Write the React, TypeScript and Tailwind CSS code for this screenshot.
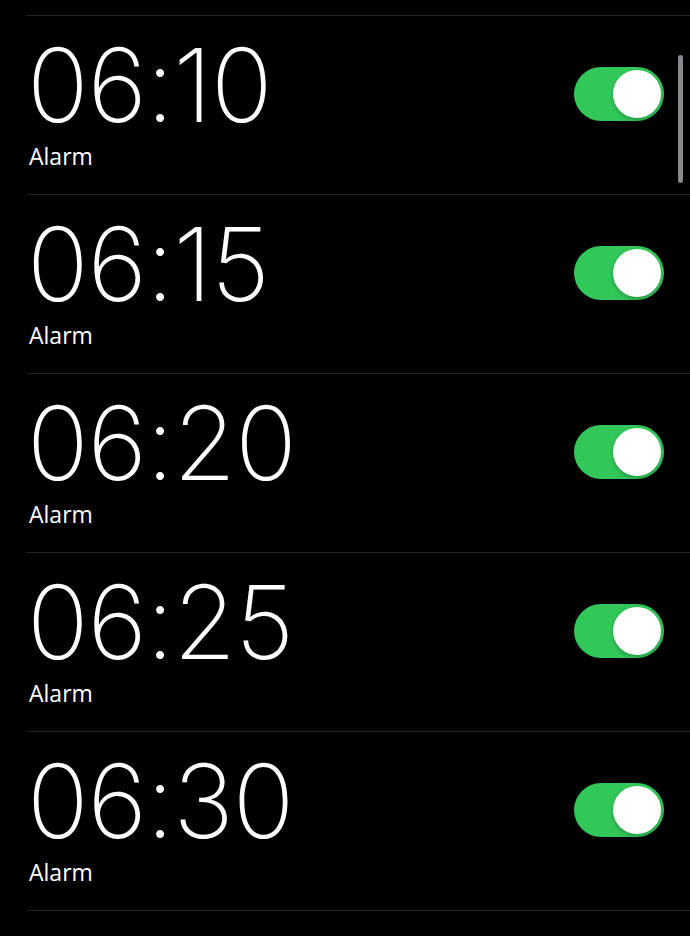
import React from 'react';

const alarms = ['06:10', '06:15', '06:20', '06:25', '06:30'];

function Toggle() {
  return (
    <div className="flex h-[54px] w-[90px] items-center justify-end rounded-full bg-[#32c759] p-[3px]">
      <div className="h-[48px] w-[48px] rounded-full bg-white shadow-[0_2px_4px_rgba(0,0,0,0.25)]" />
    </div>
  );
}

function AlarmRow({ time }: { time: string }) {
  return (
    <div className="flex h-[179px] border-t border-[#222224] pr-[26px]">
      <div className="flex flex-1 flex-col pt-[29px]">
        <div className="text-[102px] font-extralight leading-[80px] tracking-[-1px] text-white" style={{ fontFamily: 'Inter, sans-serif' }}>
          {time}
        </div>
        <div className="ml-[2px] mt-[18px] text-[23px] leading-[26px] text-white" style={{ fontFamily: '"Open Sans", sans-serif' }}>
          Alarm
        </div>
      </div>
      <div className="pt-[51px]">
        <Toggle />
      </div>
    </div>
  );
}

export default function App() {
  return (
    <div className="relative h-[936px] w-[690px] overflow-hidden bg-black pt-[15px]">
      <div className="ml-[27px]">
        {alarms.map((t) => (
          <AlarmRow key={t} time={t} />
        ))}
        <div className="border-t border-[#222224]" />
      </div>
      <div className="absolute left-[678px] top-[55px] h-[128px] w-[5px] rounded-full bg-[#8a8a8e]" />
    </div>
  );
}
